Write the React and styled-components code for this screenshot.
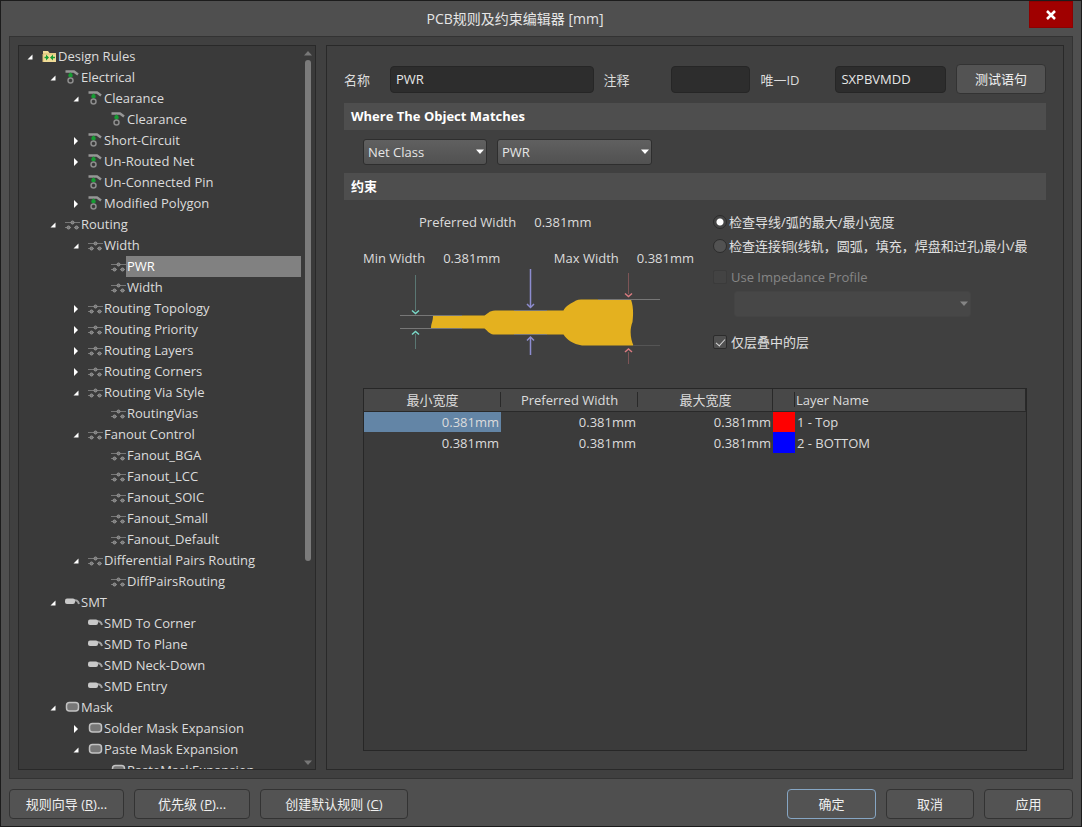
import React, { useState } from 'react'
import styled, { createGlobalStyle, css } from 'styled-components'

const GlobalStyle = createGlobalStyle`
  * {
    box-sizing: border-box;
  }

  body {
    margin: 0;
    background: #4f4f4f;
  }

  body, button, input, select {
    font-family: "Open Sans", "Noto Sans CJK SC", sans-serif;
    font-size: 13px;
    line-height: 20px;
    color: #dcdcdc;
  }
`

const Window = styled.div`
  display: flex;
  flex-direction: column;
  height: 100vh;
  padding: 0 8px;
  border: 1px solid #1c1c1c;
  background: #4f4f4f;
`

const TitleBar = styled.header`
  display: flex;
  flex: none;
  height: 35px;
`

const Title = styled.h1`
  flex: 1;
  align-self: center;
  margin: 0;
  padding-right: 8px;
  font-size: 14px;
  font-weight: 400;
  text-align: center;
  color: #e6e6e6;
`

const CloseButton = styled.button`
  display: flex;
  justify-content: center;
  align-items: center;
  width: 44px;
  height: 27px;
  padding: 0;
  border: 1px solid #8e0000;
  background: #a00000;
  cursor: pointer;
`

const Body = styled.main`
  display: flex;
  flex: 1;
  min-height: 0;
  gap: 10px;
  padding: 8px;
  border: 1px solid #333;
  background: #404040;
`

const TreePanel = styled.nav`
  display: flex;
  flex: none;
  width: 298px;
  border: 1px solid #292929;
  background: #3a3a3a;
`

const Tree = styled.ul`
  flex: 1;
  margin: 0;
  padding: 0;
  list-style: none;
  overflow: hidden;
`

const TreeRow = styled.li`
  display: flex;
  align-items: center;
  height: 21px;
  padding-left: ${({ $level }) => 7 + $level * 23}px;
`

const Toggle = styled.span`
  display: flex;
  flex: none;
  width: 16px;
`

const RowIcon = styled.svg`
  flex: none;
  width: 15px;
  height: 15px;
  overflow: visible;
`

const RowLabel = styled.span`
  flex: ${({ $selected }) => ($selected ? 1 : 'none')};
  height: 21px;
  padding-left: 1px;
  white-space: nowrap;
  ${({ $selected }) => $selected && css`
    background: #818181;
    color: #fff;
  `}
`

const ScrollBar = styled.div`
  display: flex;
  flex-direction: column;
  align-items: center;
  width: 14px;
  padding: 5px 0 4px;
`

const ScrollTrack = styled.div`
  flex: 1;
  width: 6px;
  margin: 4px 0;
`

const ScrollThumb = styled.div`
  height: 72%;
  border-radius: 3px;
  background: #7b7b7b;
`

const RulePanel = styled.section`
  display: flex;
  flex-direction: column;
  flex: 1;
  min-width: 0;
  padding: 18px 17px;
  border: 1px solid #292929;
`

const FormRow = styled.div`
  display: flex;
  align-items: center;
  gap: 10px;
`

const FieldLabel = styled.label`
  flex: none;
  width: ${({ $width }) => $width}px;
  padding-top: 2px;
`

const TextField = styled.input`
  flex: ${({ $size }) => `${$size} 1 ${$size}px`};
  min-width: 0;
  height: 27px;
  padding: 0 5px;
  border: 1px solid #262626;
  border-radius: 4px;
  background: #2d2d2d;
  color: #e6e6e6;
`

const Button = styled.button`
  height: 30px;
  width: ${({ $width }) => $width}px;
  padding: 0;
  border: ${({ $primary }) => ($primary ? '1px solid #86a6c4' : '1px solid #333')};
  border-radius: 4px;
  background: #535353;
  color: #f0f0f0;
  cursor: pointer;
`

const SectionTitle = styled.h2`
  flex: none;
  height: 27px;
  margin: ${({ $top }) => $top}px 0 0;
  padding: 0 7px;
  background: #4e4e4e;
  font-size: 13px;
  line-height: 27px;
  font-weight: 700;
  color: #fff;
`

const MatchRow = styled.div`
  display: flex;
  gap: 10px;
  margin-top: 9px;
  padding-left: 19px;
`

const SelectBox = styled.span`
  position: relative;
  display: flex;
  width: ${({ $width }) => $width}px;

  svg {
    position: absolute;
    right: 3px;
    top: 10px;
    pointer-events: none;
  }
`

const Select = styled.select`
  appearance: none;
  width: 100%;
  height: 26px;
  padding: 0 4px;
  border: 1px solid #2e2e2e;
  border-radius: 3px;
  background: linear-gradient(#606060, #515151);
  color: #e6e6e6;

  &:disabled {
    border-color: #444;
    background: #474747;
    opacity: 1;
  }
`

const Constraints = styled.div`
  display: flex;
  gap: 19px;
  margin-top: 12px;
  padding: 0 19px;
`

const WidthBlock = styled.div`
  flex: none;
  width: 331px;
`

const WidthRow = styled.div`
  display: flex;
  justify-content: space-between;
  margin-bottom: 16px;
  padding-left: ${({ $indent }) => $indent || 0}px;
`

const WidthItem = styled.div`
  display: flex;
  gap: 18px;
  white-space: nowrap;
`

const Drawing = styled.svg`
  display: block;
  width: 260px;
  height: 97px;
  margin: -16px 0 0 37px;
  overflow: visible;
`

const Options = styled.div`
  flex: 1;
  min-width: 0;
  overflow: hidden;
`

const Option = styled.label`
  display: flex;
  align-items: center;
  gap: ${({ $gap }) => $gap || 2}px;
  height: 20px;
  margin-bottom: 4px;
  white-space: nowrap;
  color: ${({ $disabled }) => ($disabled ? '#868686' : '#e0e0e0')};
`

const Radio = styled.input`
  appearance: none;
  flex: none;
  width: 14px;
  height: 14px;
  margin: 0;
  border: 1px solid #2c2c2c;
  border-radius: 50%;
  background: #525252;

  &:checked {
    background: radial-gradient(circle, #fff 0 3px, #444 4px);
  }
`

const Check = styled.input`
  appearance: none;
  display: grid;
  place-items: center;
  flex: none;
  width: 14px;
  height: 14px;
  margin: 0;
  border: 1px solid #2c2c2c;
  border-radius: 2px;
  background: #505050;

  &:checked::before {
    content: "";
    width: 4px;
    height: 8px;
    border: solid #d8d8d8;
    border-width: 0 1px 1px 0;
    transform: translateY(-1px) rotate(42deg);
  }

  &:disabled {
    border-color: #3b3b3b;
    background: #434343;
  }
`

const ProfileGroup = styled.div`
  margin: 11px 0 15px;
`

const ProfileRow = styled.div`
  margin-left: 21px;
`

const TableFrame = styled.div`
  flex: 1;
  min-height: 0;
  margin: 23px 19px 0;
  border: 1px solid #272727;
  background: #3b3b3b;
`

const LayerTable = styled.table`
  width: 100%;
  table-layout: fixed;
  border-collapse: collapse;
`

const HeadCell = styled.th`
  width: ${({ $width }) => ($width ? `${$width}px` : 'auto')};
  height: 22px;
  padding: 0 1px;
  border-bottom: 1px solid #292929;
  background: linear-gradient(#292929, #292929) right center / 1px ${({ $full }) => ($full ? 22 : 15)}px no-repeat, #484848;
  font-weight: 400;
  text-align: ${({ $left }) => ($left ? 'left' : 'center')};
`

const Cell = styled.td`
  height: 21px;
  padding: 0 2px;
  text-align: ${({ $left }) => ($left ? 'left' : 'right')};
  background: ${({ $fill }) => $fill || 'transparent'};
`

const Footer = styled.footer`
  display: flex;
  flex: none;
  gap: 10px;
  padding: 10px 0 7px;
`

const Spacer = styled.div`
  flex: 1;
`

const ICONS = {
    folder: (
        <>
            <path d="M1 13V2h5l1.500 2H14v9z" fill="#f1dc98" />
            <path d="M1 13V5h13" fill="none" stroke="#d9bd70" />
            <path d="M2.500 8.500H5M13 8.500h-2.500" stroke="#169c33" strokeWidth="1.500" />
            <path d="M4 5.500l3 3-3 3zM11 5.500l-3 3 3 3z" fill="#169c33" />
        </>
    ),
    electrical: (
        <>
            <path d="M0.500 1.500H9L13 4.500" fill="none" stroke="#969696" strokeWidth="2.500" />
            <path d="M5.500 2.500l2.500 2H7L8 6 5.500 8 3 6l1-1.500H3z" fill="#169c33" />
            <circle cx="5.500" cy="10.500" r="2.500" fill="#3a3a3a" stroke="#8c8c8c" strokeWidth="1.500" />
        </>
    ),
    routing: (
        <>
            <path d="M0 5.500h15M0 10.500h14" fill="none" stroke="#777" strokeWidth="1" />
            <g fill="#777" stroke="#999" strokeWidth="1">
                <circle cx="7.500" cy="5.500" r="1.500" />
                <circle cx="3.500" cy="10.500" r="1.500" />
                <circle cx="11.500" cy="10.500" r="1.500" />
            </g>
            <path d="M6 10.500h3" stroke="#3a3a3a" strokeWidth="1" />
        </>
    ),
    smt: (
        <>
            <path d="M8 5.500c3-1 5 0 6 3.500" fill="none" stroke="#a4a4a4" strokeWidth="2" />
            <rect x="0" y="3.500" width="10" height="5.500" rx="2" fill="#c9c9c9" />
        </>
    ),
    mask: <rect x="1.500" y="2.500" width="12" height="8.500" rx="3" fill="#777" stroke="#c2c2c2" strokeWidth="1.500" />,
}

// level, icon, label, open (undefined when the node has no arrow)
const NODES = [
    [0, 'folder', 'Design Rules', true],
    [1, 'electrical', 'Electrical', true],
    [2, 'electrical', 'Clearance', true],
    [3, 'electrical', 'Clearance'],
    [2, 'electrical', 'Short-Circuit', false],
    [2, 'electrical', 'Un-Routed Net', false],
    [2, 'electrical', 'Un-Connected Pin'],
    [2, 'electrical', 'Modified Polygon', false],
    [1, 'routing', 'Routing', true],
    [2, 'routing', 'Width', true],
    [3, 'routing', 'PWR'],
    [3, 'routing', 'Width'],
    [2, 'routing', 'Routing Topology', false],
    [2, 'routing', 'Routing Priority', false],
    [2, 'routing', 'Routing Layers', false],
    [2, 'routing', 'Routing Corners', false],
    [2, 'routing', 'Routing Via Style', true],
    [3, 'routing', 'RoutingVias'],
    [2, 'routing', 'Fanout Control', true],
    [3, 'routing', 'Fanout_BGA'],
    [3, 'routing', 'Fanout_LCC'],
    [3, 'routing', 'Fanout_SOIC'],
    [3, 'routing', 'Fanout_Small'],
    [3, 'routing', 'Fanout_Default'],
    [2, 'routing', 'Differential Pairs Routing', true],
    [3, 'routing', 'DiffPairsRouting'],
    [1, 'smt', 'SMT', true],
    [2, 'smt', 'SMD To Corner'],
    [2, 'smt', 'SMD To Plane'],
    [2, 'smt', 'SMD Neck-Down'],
    [2, 'smt', 'SMD Entry'],
    [1, 'mask', 'Mask', true],
    [2, 'mask', 'Solder Mask Expansion', false],
    [2, 'mask', 'Paste Mask Expansion', true],
    [3, 'mask', 'PasteMaskExpansion'],
]

const LAYERS = [
    { name: '1 - Top', color: '#ff0000' },
    { name: '2 - BOTTOM', color: '#0000ff' },
]

const Arrow = ({ open }) => (
    <svg width="8" height="8" viewBox="0 0 8 8">
        {open === true && <path d="M6.500 1.500v5h-5z" fill="#fff" />}
        {open === false && <path d="M2 0l4 4-4 4z" fill="#fff" />}
    </svg>
)

const Caret = ({ color = '#fff', up }) => (
    <svg width="8" height="5" viewBox="0 0 8 5">
        <path d={up ? 'M0 4.500h8L4 0z' : 'M0 0.500h8L4 5z'} fill={color} />
    </svg>
)

const Dropdown = ({ width, options = [], disabled, label }) => (
    <SelectBox $width={width}>
        <Select disabled={disabled} aria-label={label}>
            {options.map((option) => <option key={option}>{option}</option>)}
        </Select>
        <Caret color={disabled ? '#858585' : '#fff'} />
    </SelectBox>
)

const RuleTree = () => {
    const [selected, setSelected] = useState(10);

    return (
        <TreePanel>
            <Tree>
                {NODES.map(([level, icon, label, open], index) => (
                    <TreeRow key={index} $level={level} onClick={() => setSelected(index)}>
                        <Toggle><Arrow open={open} /></Toggle>
                        <RowIcon viewBox="0 0 15 15">{ICONS[icon]}</RowIcon>
                        <RowLabel $selected={index === selected}>{label}</RowLabel>
                    </TreeRow>
                ))}
            </Tree>
            <ScrollBar>
                <Caret color="#777" up />
                <ScrollTrack><ScrollThumb /></ScrollTrack>
                <Caret color="#777" />
            </ScrollBar>
        </TreePanel>
    );
};

const TrackDrawing = () => (
    <Drawing viewBox="0 0 260 97" fill="none">
        <path
            d="M33 47.500H84.500C87 46.500 89 42.500 95 42.500H163.500C165 38 172 35 176 32.500Q178 31.500 181 31.500H231C234 40 233 49 232.500 54C229 63 231 72 233.500 77.500H182C173 76 167 72 163.500 66.500H93.500C89 66 87 62 84.500 60.500H31C31 55 33 54 33 47.500z"
            fill="#e4b11f"
        />
        <path d="M0 47.500H62M0 60.500H62M114 42.500H147M114 66.500H147M198 31.500H260" stroke="#777" />
        <path d="M233 77.500H260" stroke="#555" />
        <path d="M15.500 7V43M15.500 66V81" stroke="#5a7773" />
        <path d="M12 42.500l3.500 3 3.500-3M12 66.500l3.500-3 3.500 3" stroke="#7ad9c8" strokeWidth="1.500" />
        <path d="M130.500 1V39M130.500 70V87" stroke="#8d8ccf" strokeWidth="1.500" />
        <path d="M127 36l3.500 3.500L134 36M127 72.500l3.500-3.500 3.500 3.500" stroke="#8d8ccf" strokeWidth="1.500" />
        <path d="M228.500 5V26M228.500 84V96" stroke="#7d5456" />
        <path d="M225 25.500l3.500 3 3.500-3M225 84l3.500-3 3.500 3" stroke="#d97b80" strokeWidth="1.500" />
    </Drawing>
)

const WidthValue = ({ label }) => (
    <WidthItem>
        <span>{label}</span>
        <span>0.381mm</span>
    </WidthItem>
)

const App = () => {
    const [scope, setScope] = useState('track');
    const [stackOnly, setStackOnly] = useState(true);

    return (
        <Window>
            <GlobalStyle />
            <TitleBar>
                <Title>PCB规则及约束编辑器 [mm]</Title>
                <CloseButton aria-label="Close">
                    <svg width="10" height="10" viewBox="0 0 10 10">
                        <path d="M1 1l8 8M9 1L1 9" stroke="#fff" strokeWidth="2.500" />
                    </svg>
                </CloseButton>
            </TitleBar>
            <Body>
                <RuleTree />
                <RulePanel>
                    <FormRow>
                        <FieldLabel $width={36} htmlFor="name">名称</FieldLabel>
                        <TextField $size={204} id="name" defaultValue="PWR" />
                        <FieldLabel $width={57} htmlFor="comment">注释</FieldLabel>
                        <TextField $size={80} id="comment" />
                        <FieldLabel $width={65} htmlFor="uid">唯一ID</FieldLabel>
                        <TextField $size={111} id="uid" defaultValue="SXPBVMDD" />
                        <Button $width={90}>测试语句</Button>
                    </FormRow>
                    <SectionTitle $top={9}>Where The Object Matches</SectionTitle>
                    <MatchRow>
                        <Dropdown width={124} options={['Net Class']} label="Scope" />
                        <Dropdown width={155} options={['PWR']} label="Net class" />
                    </MatchRow>
                    <SectionTitle $top={8}>约束</SectionTitle>
                    <Constraints>
                        <WidthBlock>
                            <WidthRow $indent={56}>
                                <WidthValue label="Preferred Width" />
                            </WidthRow>
                            <WidthRow>
                                <WidthValue label="Min Width" />
                                <WidthValue label="Max Width" />
                            </WidthRow>
                            <TrackDrawing />
                        </WidthBlock>
                        <Options>
                            <Option>
                                <Radio type="radio" name="scope" checked={scope === 'track'} onChange={() => setScope('track')} />
                                检查导线/弧的最大/最小宽度
                            </Option>
                            <Option>
                                <Radio type="radio" name="scope" checked={scope === 'copper'} onChange={() => setScope('copper')} />
                                检查连接铜(线轨，圆弧，填充，焊盘和过孔)最小/最
                            </Option>
                            <ProfileGroup>
                                <Option $gap={4} $disabled>
                                    <Check type="checkbox" disabled />
                                    Use Impedance Profile
                                </Option>
                                <ProfileRow>
                                    <Dropdown width={237} disabled label="Impedance profile" />
                                </ProfileRow>
                            </ProfileGroup>
                            <Option $gap={4}>
                                <Check type="checkbox" checked={stackOnly} onChange={(e) => setStackOnly(e.target.checked)} />
                                仅层叠中的层
                            </Option>
                        </Options>
                    </Constraints>
                    <TableFrame>
                        <LayerTable>
                            <thead>
                                <tr>
                                    <HeadCell $width={137}>最小宽度</HeadCell>
                                    <HeadCell $width={137}>Preferred Width</HeadCell>
                                    <HeadCell $width={135} $full>最大宽度</HeadCell>
                                    <HeadCell $width={22} />
                                    <HeadCell $left $full>Layer Name</HeadCell>
                                </tr>
                            </thead>
                            <tbody>
                                {LAYERS.map(({ name, color }, index) => (
                                    <tr key={name}>
                                        <Cell $fill={index === 0 ? '#6385a6' : undefined}>0.381mm</Cell>
                                        <Cell>0.381mm</Cell>
                                        <Cell>0.381mm</Cell>
                                        <Cell $fill={color} />
                                        <Cell $left>{name}</Cell>
                                    </tr>
                                ))}
                            </tbody>
                        </LayerTable>
                    </TableFrame>
                </RulePanel>
            </Body>
            <Footer>
                <Button $width={115}>规则向导 (<u>R</u>)...</Button>
                <Button $width={116}>优先级 (<u>P</u>)...</Button>
                <Button $width={148}>创建默认规则 (<u>C</u>)</Button>
                <Spacer />
                <Button $width={89} $primary>确定</Button>
                <Button $width={88}>取消</Button>
                <Button $width={89}>应用</Button>
            </Footer>
        </Window>
    );
};

export default App;
